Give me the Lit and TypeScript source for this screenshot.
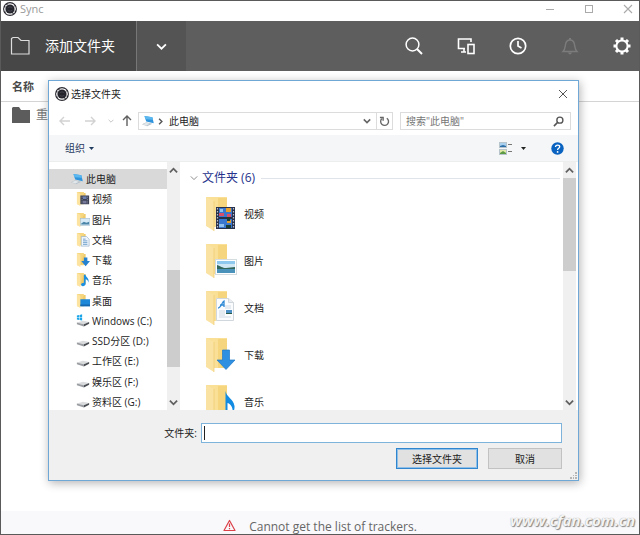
import { LitElement, html, css, svg, nothing } from "lit";
import { customElement, property } from "lit/decorators.js";

const TEXT = css`
  * { box-sizing: border-box; }
  button, input, table { font: inherit; color: inherit; }
  button { border: 0; padding: 0; margin: 0; background: none; display: flex; align-items: center; justify-content: center; }
  ul { list-style: none; margin: 0; padding: 0; }
  svg { display: block; flex: none; }
`;

const syncLogo = html`<svg width="14" height="14" viewBox="0 0 14 14">
  <circle cx="7" cy="7" r="6.4" fill="#fff" stroke="#2b2b33" stroke-width="1.1"/>
  <circle cx="7" cy="7" r="4.6" fill="#24242c"/>
  <path d="M2.2 5.4 1.4 4.2M4.2 2.9 3.6 1.7M11.8 8.6l.9 1.2M9.8 11.1l.6 1.2M2.6 9.8l-1 .6M11.4 4.2l1-.6" stroke="#24242c" stroke-width="1.2"/>
  <path d="M4.6 6.2C5.4 4.6 8 4.4 9.3 5.8M9.4 7.9C8.5 9.5 6 9.6 4.7 8.2" fill="none" stroke="#4d4d57" stroke-width=".8"/>
</svg>`;

const chevron = (d: string, size = 9, color = "#555", w = 1.6) => html`<svg width=${size} height=${size} viewBox="0 0 10 10">
  <path d=${d} fill="none" stroke=${color} stroke-width=${w}/></svg>`;
const DOWN = "M1 3l4 4 4-4";
const UP = "M1 7l4-4 4 4";
const RIGHT = "M3 1l4 4-4 4";

const computer = svg`
  <path d="M4 2.2 13 3.600l1.600 7L6 8.600z" fill="#2f94dc"/>
  <path d="M4 2.2 13 3.600l.7 3L5 6z" fill="#5cb8ef"/>
  <path d="M1 11.6 6 9.4l7 1.8-6 2.8z" fill="#b9c4cc"/>
  <path d="M2 11.600 6 10l4 1-4 2z" fill="#e2e8ec"/>`;

const folderBase = svg`
  <path d="M1 0h8v14H4z" fill="#f6d67e"/>
  <path d="M9 1h2v12H5z" fill="#f0cb6c"/>
  <path d="M1 0l4 2v14l-4-2z" fill="#fde3a0"/>`;

const smallBadges: Record<string, unknown> = {
  video: svg`<rect x="5" y="4" width="10" height="10" fill="#3d4257"/><path d="M7 4v10M13 4v10" stroke="#8f95a8" stroke-dasharray="1 1"/><rect x="8" y="5" width="4" height="3" fill="#6a7fb0"/><rect x="8" y="10" width="4" height="3" fill="#77799a"/>`,
  picture: svg`<rect x="5" y="6" width="11" height="8" fill="#d6e9f6" stroke="#9bb8cc" stroke-width=".6"/><path d="M6 12l3-2 3 1 3-1v3H6z" fill="#4b86a8"/>`,
  document: svg`<path d="M6 4h6l3 3v8H6z" fill="#edf4fb" stroke="#8eabc6" stroke-width=".7"/><path d="M8 7h3M8 9h5M8 11h5M8 13h5" stroke="#5a91c4" stroke-width=".9"/>`,
  download: svg`<path d="M9 5h4v4h3l-5 6-5-6h3z" fill="#2482d0"/>`,
  music: svg`<path d="M9 2h2c0 3 5 4 3 9 0-3-2-4-3-4v5c0 3-4 4-5 2s1-3 3-3z" fill="#1c8fe0"/>`,
  desktop: svg`<rect x="5" y="6" width="11" height="8" fill="#1d87d8"/><path d="M5 12h11v2H5z" fill="#1668ae"/>`,
};

const drive = svg`
  <path d="M1 9.600 8 7.600l7 1.400-6 2.600z" fill="#d9dbdd"/>
  <path d="M1 9.600l8 2v2.600l-8-2.400z" fill="#9a9ea2"/>
  <path d="M9 11.600l6-2.600v2.200L9 14.200z" fill="#4a4e52"/>`;

function smallIcon(kind: string) {
  const art =
    kind === "computer" ? computer :
    kind === "drive" ? drive :
    kind === "system" ? svg`${drive}<path d="M1 1.6 3.6 1v2.6H1zM4.2 1 7 .4v3.2H4.2zM1 4.2h2.6v2.6L1 6.3zM4.2 4.2H7v3.2l-2.8-.5z" fill="#19a5e8"/>` :
    svg`${folderBase}${smallBadges[kind]}`;
  return html`<svg width="14" height="14" viewBox="0 0 16 16">${art}</svg>`;
}

const largeBadges: Record<string, unknown> = {
  video: svg`
    <rect x="11" y="11" width="19" height="22" fill="#27304a"/>
    <path d="M12.500 12v21M28.500 12v21" stroke="#b9bfcc" stroke-width="1.2" stroke-dasharray="1.500 1.500"/>
    <rect x="14" y="12" width="13" height="9" fill="#3a78d0"/><rect x="14" y="23" width="13" height="9" fill="#3a78d0"/>
    <path d="M21 12h5v4h-5zM22 24h4v3h-4z" fill="#e7a02c"/><path d="M14 17h5v3h-5zM22 18h4v3h-4z" fill="#d64e6a"/>
    <path d="M15 13h3v3h-3zM14 28h5v3h-5z" fill="#8fc0ee"/><path d="M22 21h3v4h-3zM21 29h5v3h-5z" fill="#1c3d33"/>`,
  picture: svg`
    <rect x="10.500" y="16.500" width="21" height="15" fill="#fff" stroke="#d5dce0"/>
    <rect x="12" y="18" width="18" height="6" fill="#8fc8ee"/><rect x="12" y="21" width="18" height="4" fill="#cfe6f4"/>
    <path d="M12 22c4 1 5 3 9 3 3 0 6-1 9-1v3H12z" fill="#33675c"/><rect x="12" y="26" width="18" height="4" fill="#4a92ba"/>`,
  document: svg`
    <path d="M11.500 8.500h12l5 4v18h-17z" fill="#fbfcfd" stroke="#d0d7dd"/>
    <path d="M23.500 8.500v4h5" fill="#e8edf2" stroke="#d0d7dd"/>
    <path d="M13 18c3 0 4-6 6-7v6M15 15h4" fill="none" stroke="#2f8ad6" stroke-width="1.300"/>
    <path d="M20 16h6M20 18h6M14 21h6M14 23h6M14 25h6M14 27h12" stroke="#c4d2de" stroke-width=".8"/>
    <rect x="21" y="20" width="6" height="4" fill="#4b8fc4"/><path d="M21 23h6v1h-6z" fill="#275c4a"/>`,
  download: svg`<path d="M17.500 13h7v10h5.500L21 32.500 12 23h5.500z" fill="#2f8fe0" stroke="#1f78c8" stroke-width=".7"/>`,
  music: svg`<path d="M20.500 7c1 6 8 8 9 15 .3 3-1 6-2 8 1-7-2-10-5-11v10c0 6-8 8-9 4-1-4 4-6 7-5z" fill="#128be2"/>`,
};

function largeIcon(kind: string) {
  return html`<svg width="32" height="36" viewBox="0 0 32 36">
    <path d="M1 1h21v30H8z" fill="#f9e096"/>
    <path d="M13 2h9v29h-9z" fill="#f5d67e"/>
    <path d="M1 1l8 4v30l-8-5z" fill="#fae3a2"/>
    <path d="M9 5v30" stroke="#ecca70" stroke-width=".7"/>
    ${largeBadges[kind]}</svg>`;
}

/** Decorative vertical scrollbar; thumb position and size are shares of the track. */
@customElement("scroll-bar")
class ScrollBar extends LitElement {
  @property({ type: Number }) before = 0;
  @property({ type: Number }) size = 1;
  @property({ type: Number }) after = 1;
  static styles = [TEXT, css`
    :host { display: flex; flex-direction: column; width: 13px; flex: none; background: #f0f0f0; }
    button { width: 13px; height: 16px; flex: none; }
    .track { flex: 1; display: grid; }
    .thumb { background: #cdcdcd; grid-row: 2; }
  `];
  render() {
    return html`<button aria-label="Up">${chevron(UP, 9, "#606060", 2)}</button>
      <div class="track" style="grid-template-rows:${this.before}fr ${this.size}fr ${this.after}fr"><div class="thumb"></div></div>
      <button aria-label="Down">${chevron(DOWN, 9, "#606060", 2)}</button>`;
  }
}

@customElement("folder-dialog")
class FolderDialog extends LitElement {
  static styles = [TEXT, css`
    :host { display: flex; flex-direction: column; background: #fff; border: 1px solid #6fa8d6; box-shadow: 1px 2px 9px rgba(0, 0, 0, .3); color: #222; font-size: 10px; line-height: 16px; }
    .title { display: flex; align-items: center; gap: 2px; height: 26px; padding: 0 10px 0 6px; }
    .title h2 { flex: 1; margin: 0; font-size: 10px; font-weight: 400; }
    .nav { display: flex; align-items: center; height: 28px; padding: 0 7px 0 8px; }
    .nav .step { width: 16px; margin-right: 9px; }
    .nav .recent { width: 8px; margin-right: 6px; }
    .nav .up { width: 12px; margin-right: 5px; }
    .address { flex: 254; display: flex; align-items: center; height: 18px; border: 1px solid #dcdcdc; padding-left: 2px; }
    .address .place { flex: 1; margin-left: 5px; }
    .address .sep { margin-left: 2px; }
    .address .drop { width: 18px; height: 16px; }
    .address .refresh { width: 16px; height: 16px; border-left: 1px solid #dcdcdc; }
    .search { flex: 160; display: flex; align-items: center; height: 18px; margin-left: 7px; border: 1px solid #dcdcdc; padding: 0 6px 0 5px; }
    .search input { flex: 1; min-width: 0; border: 0; padding: 0; outline: 0; background: none; }
    .search input::placeholder { color: #777; opacity: 1; }
    .tools { display: flex; align-items: center; height: 27px; background: #f5f6f7; border-bottom: 1px solid #eceded; padding: 0 14px 0 16px; color: #1f3a5f; }
    .tools .organise { gap: 4px; margin-right: auto; }
    .tools .view { gap: 9px; margin-right: 25px; }
    .body { flex: 1; min-height: 0; display: flex; padding-right: 2px; }
    .tree { width: 118px; flex: none; overflow: hidden; padding-top: 7px; }
    .tree ul { height: 243px; display: flex; flex-direction: column; justify-content: space-between; }
    .tree li { display: flex; align-items: center; gap: 2px; height: 20px; padding-left: 27px; white-space: nowrap; }
    .tree li.root { padding-left: 21px; background: #d9d9d9; }
    .files { flex: 1; min-width: 0; overflow: hidden; padding: 6px 3px 0 9px; margin-left: 1px; }
    .group { display: flex; align-items: center; gap: 4px; height: 20px; }
    .group h3 { margin: 0; font-size: 12px; font-weight: 400; color: #26338c; }
    .group hr { flex: 1; border: 0; border-top: 1px solid #e0e3ea; margin: 0 0 0 2px; }
    .files ul { padding: 2px 0 0 15px; }
    .files li { display: flex; align-items: center; gap: 7px; height: 47px; }
    .bottom { background: #f0f0f0; padding: 13px 16px 11px 16px; display: flex; flex-direction: column; gap: 5px; position: relative; }
    .name { display: flex; align-items: center; gap: 4px; }
    .name label { width: 132px; flex: none; text-align: right; }
    .name input { flex: 1; min-width: 0; height: 20px; border: 1px solid #7eb4dc; padding: 2px; outline: 0; caret-color: transparent; background-color: #fff; background-image: linear-gradient(#222, #222); background-repeat: no-repeat; background-origin: content-box; background-size: 1px 100%; }
    .actions { display: flex; justify-content: flex-end; gap: 10px; }
    .actions button { width: 74px; height: 21px; background: #e1e1e1; border: 1px solid #c2c2c2; }
    .actions .ok { width: 82px; border-color: #2f86cf; box-shadow: inset 0 0 0 1px #8dbfe8; }
    .grip { position: absolute; right: 1px; bottom: 1px; }
  `];

  tree: [string, string][] = [
    ["computer", "此电脑"], ["video", "视频"], ["picture", "图片"], ["document", "文档"], ["download", "下载"], ["music", "音乐"],
    ["desktop", "桌面"], ["system", "Windows (C:)"], ["drive", "SSD分区 (D:)"], ["drive", "工作区 (E:)"], ["drive", "娱乐区 (F:)"], ["drive", "资料区 (G:)"],
  ];
  files: [string, string][] = [["video", "视频"], ["picture", "图片"], ["document", "文档"], ["download", "下载"], ["music", "音乐"]];

  arrow(d: string, color: string) {
    return html`<svg width="12" height="12" viewBox="0 0 12 12"><path d=${d} fill="none" stroke=${color} stroke-width="1.4"/></svg>`;
  }

  render() {
    return html`
      <div class="title">${syncLogo}<h2>选择文件夹</h2>
        <button aria-label="Close"><svg width="10" height="10" viewBox="0 0 10 10"><path d="M1 1l8 8M9 1 1 9" stroke="#555" stroke-width="1"/></svg></button>
      </div>
      <div class="nav">
        <button class="step" aria-label="Back">${this.arrow("M11 6H1M5 2 1 6l4 4", "#d2d2d2")}</button>
        <button class="step" aria-label="Forward">${this.arrow("M1 6h10M7 2l4 4-4 4", "#d2d2d2")}</button>
        <button class="recent" aria-label="Recent">${chevron(DOWN, 6, "#c4c4c4")}</button>
        <button class="up" aria-label="Up">${this.arrow("M6 11V1M2 5l4-4 4 4", "#606060")}</button>
        <div class="address">${smallIcon("computer")}<span class="sep">${chevron(RIGHT, 7, "#555", 2)}</span><span class="place">此电脑</span>
          <button class="drop" aria-label="History">${chevron(DOWN, 8, "#666", 2)}</button>
          <button class="refresh" aria-label="Refresh"><svg width="11" height="11" viewBox="0 0 12 12"><path d="M8.500 2.400A4.300 4.300 0 1 1 3 3M1 1.700h3.500v3.500" fill="none" stroke="#666" stroke-width="1.500"/></svg></button>
        </div>
        <div class="search"><input type="text" aria-label="搜索" placeholder='搜索"此电脑"'>
          <svg width="11" height="11" viewBox="0 0 12 12"><circle cx="7.500" cy="4.500" r="3.300" fill="none" stroke="#555" stroke-width="1.500"/><path d="M5 7 1 11" stroke="#555" stroke-width="1.700"/></svg></div>
      </div>
      <div class="tools">
        <button class="organise">组织<svg width="5" height="3" viewBox="0 0 5 3"><path d="M0 0h5L2.500 3z" fill="#1f3a5f"/></svg></button>
        <button class="view" aria-label="View"><svg width="13" height="13" viewBox="0 0 13 13">
          <rect x=".5" y=".5" width="7" height="5" fill="#a9d0ef" stroke="#b7c4cc"/><path d="M1 4l3-1 3 1v1H1z" fill="#2c6fa8"/>
          <rect x=".5" y="7.500" width="7" height="5" fill="#dfe9a8" stroke="#b7c4cc"/><path d="M1 11l3-2 3 2v1H1z" fill="#5c9a46"/>
          <path d="M9 2.500h4M9 9.500h4" stroke="#777"/></svg><svg width="5" height="3" viewBox="0 0 5 3"><path d="M0 0h5L2.500 3z" fill="#222"/></svg></button>
        <button aria-label="Help"><svg width="13" height="13" viewBox="0 0 13 13"><circle cx="6.500" cy="6.500" r="6.200" fill="#0a63c0"/><path d="M4.500 5c0-2.700 4.200-2.500 4.200-.2C8.700 6.300 6.600 6.300 6.600 8" fill="none" stroke="#fff" stroke-width="1.300"/><circle cx="6.600" cy="9.900" r=".9" fill="#fff"/></svg></button>
      </div>
      <div class="body">
        <nav class="tree"><ul>${this.tree.map(([k, t]) => html`<li class=${k === "computer" ? "root" : nothing}>${smallIcon(k)}<span>${t}</span></li>`)}</ul></nav>
        <scroll-bar .before=${92} .size=${97} .after=${27}></scroll-bar>
        <section class="files">
          <div class="group">${chevron(DOWN, 8, "#888", 1.2)}<h3>文件夹 (6)</h3><hr></div>
          <ul>${this.files.map(([k, t]) => html`<li>${largeIcon(k)}<span>${t}</span></li>`)}</ul>
        </section>
        <scroll-bar .before=${0} .size=${93} .after=${123}></scroll-bar>
      </div>
      <div class="bottom">
        <div class="name"><label for="folder">文件夹:</label><input id="folder" type="text"></div>
        <div class="actions"><button class="ok">选择文件夹</button><button>取消</button></div>
        <svg class="grip" width="7" height="7" viewBox="0 0 7 7"><path d="M5 0h2v2H5zM5 3h2v1H5zM5 5h2v2H5zM3 3h1v1H3zM3 5h1v2H3zM0 5h2v2H0z" fill="#b5b5b5"/></svg>
      </div>`;
  }
}

@customElement("app-root")
class AppRoot extends LitElement {
  static styles = [TEXT, css`
    :host { display: flex; flex-direction: column; min-height: 100vh; box-sizing: border-box; position: relative; overflow: hidden; border: 1px solid #5a5a5a; background: #fff; font-family: "Open Sans", "Noto Sans CJK SC", sans-serif; color: #555; font-size: 12px; line-height: 16px; }
    .window { display: flex; align-items: center; gap: 3px; height: 20px; padding: 0 6px 5px 2px; color: #999; font-size: 11px; }
    .window .caption { flex: 1; }
    .window .controls { display: flex; gap: 29px; }
    .bar { display: flex; align-items: stretch; height: 50px; background: #5e5e5e; color: #fff; }
    .add { width: 135px; justify-content: flex-start; gap: 14px; padding-left: 9px; background: #474747; font-size: 14px; color: #fff; }
    .more { width: 50px; background: #545454; border-left: 1px solid #777; }
    .icons { margin-left: auto; display: flex; align-items: center; gap: 32px; padding-right: 7px; }
    .icons button { width: 20px; }
    table { width: 100%; border-collapse: collapse; }
    th { height: 30px; text-align: left; font-weight: 700; font-size: 11px; border-bottom: 1px solid #d4d4d4; padding: 2px 0 0 11px; color: #4a4a4a; }
    td { height: 28px; padding: 0 0 0 11px; color: #777; }
    .item { display: flex; align-items: center; gap: 6px; }
    footer { margin-top: auto; height: 23px; padding-top: 8px; display: flex; justify-content: center; gap: 13px; background: #f9f9fb; color: #666; position: relative; }
    .mark { position: absolute; right: 4px; bottom: 3px; font: italic 700 15px/22px "Open Sans", sans-serif; color: #f4f4f4; text-shadow: 1px 1px 1px #888, 0 0 1px #999; }
    folder-dialog { position: absolute; left: 47px; right: 60px; top: 79px; bottom: 53px; }
  `];

  render() {
    return html`
      <header class="window">${syncLogo}<span class="caption">Sync</span>
        <div class="controls">
          <button aria-label="Minimise"><svg width="10" height="10" viewBox="0 0 10 10"><path d="M1 5.500h8" stroke="#aaa"/></svg></button>
          <button aria-label="Maximise"><svg width="10" height="10" viewBox="0 0 10 10"><rect x="1.500" y="1.500" width="7" height="7" fill="none" stroke="#aaa"/></svg></button>
          <button aria-label="Close"><svg width="10" height="10" viewBox="0 0 10 10"><path d="M1 1l8 8M9 1 1 9" stroke="#aaa" stroke-width="1.100"/></svg></button>
        </div>
      </header>
      <div class="bar">
        <button class="add"><svg width="21" height="20" viewBox="0 0 21 20"><path d="M1.500 2.500 3 1.500h5l3 3h8V18H1.500z" fill="none" stroke="#ddd" stroke-width="1.200"/></svg>添加文件夹</button>
        <button class="more" aria-label="More">${chevron(DOWN, 11, "#fff", 1.6)}</button>
        <div class="icons">
          <button aria-label="Search"><svg width="20" height="20" viewBox="0 0 20 20"><circle cx="8.500" cy="8.500" r="6.400" fill="none" stroke="#fff" stroke-width="1.500"/><path d="m13 13 5 5" stroke="#fff" stroke-width="1.900"/></svg></button>
          <button aria-label="Devices"><svg width="20" height="20" viewBox="0 0 20 20"><path d="M15 6V3H2.500v9.500H9M8 12.500V16M5 16h5" fill="none" stroke="#fff" stroke-width="1.600"/><rect x="12" y="8.500" width="6" height="9" fill="none" stroke="#fff" stroke-width="1.600"/></svg></button>
          <button aria-label="History"><svg width="20" height="20" viewBox="0 0 20 20"><circle cx="10" cy="10" r="7.700" fill="none" stroke="#fff" stroke-width="1.700"/><path d="M10 5v5l3.500 2" fill="none" stroke="#fff" stroke-width="1.700"/></svg></button>
          <button aria-label="Notifications"><svg width="20" height="20" viewBox="0 0 20 20"><path d="M3 15.500c2-2 2-4 2.500-7 .5-3 2-4.500 4.500-4.500S14 5.500 14.500 8.500c.5 3 .5 5 2.500 7z" fill="none" stroke="#7c7c7c" stroke-width="1.400"/><path d="M7.500 16.500h5L10 18.800zM9 2h2v2H9z" fill="#7c7c7c"/></svg></button>
          <button aria-label="Settings"><svg width="18" height="18" viewBox="0 0 18 18"><circle cx="9" cy="9" r="5.600" fill="none" stroke="#fff" stroke-width="2"/><g stroke="#fff" stroke-width="3"><path d="M9 .5v3M9 14.500v3M.5 9h3M14.500 9h3M3 3l2.100 2.100M12.900 12.900 15 15M3 15l2.100-2.100M12.900 5.100 15 3"/></g></svg></button>
        </div>
      </div>
      <table>
        <thead><tr><th>名称</th></tr></thead>
        <tbody><tr><td><div class="item"><svg width="18" height="16" viewBox="0 0 18 16"><path d="M0 1 1 0h6l2 3h9v13H0z" fill="#5c5c5c"/></svg>重</div></td></tr></tbody>
      </table>
      <footer><svg width="13" height="13" viewBox="0 0 13 13"><path d="M6.500 1.500 12 11.500H1z" fill="none" stroke="#dc4049" stroke-width="1.200" stroke-linejoin="round"/><path d="M6.500 4.500v3.500M6.500 9v1.300" stroke="#dc4049" stroke-width="1.200"/></svg>
        <span>Cannot get the list of trackers.</span><span class="mark">www.cfan.com.cn</span></footer>
      <folder-dialog role="dialog" aria-label="选择文件夹"></folder-dialog>`;
  }
}
